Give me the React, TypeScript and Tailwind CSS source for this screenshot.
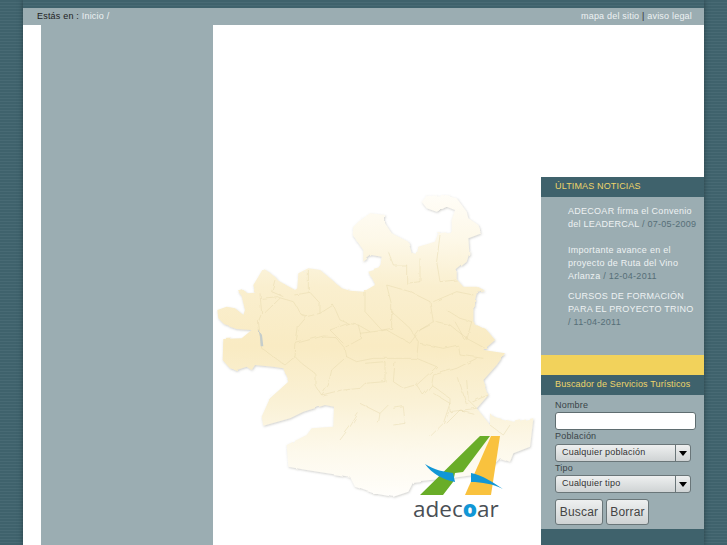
import React from 'react';

const outline =
  'M635 50 L650 33 L700 30 L740 40 L770 80 L775 100 L805 120 L815 145 L775 160 L778 205 L770 230 L740 255 L740 283 L760 305 L800 305 L825 318 L800 325 L790 365 L790 415 L830 435 L855 465 L820 495 L885 505 L860 540 L820 585 L835 630 L800 670 L840 720 L840 685 L850 695 L910 710 L970 700 L960 785 L910 805 L900 830 L870 820 L830 860 L790 870 L720 880 L660 885 L610 890 L595 920 L550 935 L490 925 L435 905 L420 875 L290 855 L235 845 L230 780 L290 750 L305 730 L370 725 L372 665 L345 660 L280 680 L240 700 L160 722 L155 695 L180 640 L235 590 L220 550 L190 545 L135 540 L125 555 L110 545 L80 555 L60 550 L38 525 L40 462 L95 460 L125 435 L80 432 L45 420 L25 400 L22 375 L50 365 L75 370 L100 390 L105 375 L95 333 L85 320 L100 315 L112 325 L135 323 L130 300 L145 275 L160 250 L195 275 L205 287 L255 315 L262 310 L265 265 L295 250 L330 255 L360 280 L395 310 L420 317 L460 320 L495 300 L475 260 L510 250 L515 215 L485 210 L460 230 L460 195 L428 150 L430 125 L445 110 L480 85 L525 90 L525 115 L545 145 L595 170 L605 205 L620 210 L625 185 L675 170 L685 145 L725 140 L725 105 L735 75 L710 65 L680 80 L650 70 Z';

const borders = [
  'M150 325 L155 385 L145 410 L155 490 L225 540',
  'M155 340 L205 335 M210 340 L165 383',
  'M205 337 L250 350 L275 390 L290 395 L265 425 L258 475 L255 515 L225 540',
  'M253 330 L300 322 L330 355 L330 385 L290 395',
  'M330 385 L370 360 L390 405 L415 415 L360 435 L400 475',
  'M258 475 L340 453 L375 455 L405 490 L410 515 L365 555 L355 600 L335 630 L315 600 L315 565 L275 535 L255 515',
  'M335 630 L395 615 M410 515 L440 530 L490 520',
  'M445 420 L455 460 L405 487 M415 415 L445 420 L480 440',
  'M465 320 L465 380 L515 435 L545 430 L545 360 L530 300',
  'M530 300 L600 320 L660 350 L670 410 L630 435 L600 475 L530 435 L450 445',
  'M545 380 L600 430 L625 470 L620 520 L490 520',
  'M630 435 L680 410 L720 420 L770 460 L825 490',
  'M670 350 L740 320 L790 330',
  'M710 375 L750 400 L785 410 L770 465 M735 410 L765 465',
  'M630 475 L700 490 L745 480 L750 510 L820 520',
  'M620 520 L680 545 L620 600 L640 630 L665 600 L670 570 L740 550 L800 520',
  'M465 535 L525 530 L525 590 L465 595 L450 610 L400 615',
  'M555 530 L550 590 L580 610 L615 600',
  'M745 580 L770 660 L810 640 L835 630',
  'M665 600 L720 640 L720 680 L800 670',
  'M535 200 L550 240 L590 240 L590 295 L630 290 L630 220',
  'M690 150 L680 230 L690 290 L740 285',
  'M450 655 L510 685 L535 660 M510 685 L505 715',
  'M445 685 L420 725 L390 765',
  'M550 670 L580 665 L585 715 L550 720',
  'M770 585 L775 645 L800 670',
  'M710 715 L750 675 L790 685 M670 625 L720 655 L700 715 L660 755',
  'M840 720 L880 750 L900 720',
  'M195 285 L185 320 L220 335 M295 255 L295 320',
];

export default function App() {
  return (
    <div className="relative h-[545px] w-[727px] overflow-hidden bg-[#41646e] bg-[repeating-linear-gradient(0deg,#3f626c_0px,#3f626c_2px,#486a74_2px,#486a74_3px)] font-['Liberation_Sans',Arial,sans-serif]">
      <div className="ml-[23px] flex h-[545px] w-[681px] flex-col pt-2 shadow-[0_0_5px_rgba(30,50,55,0.7)]">
        {/* top bar */}
        <div className="flex h-[17px] shrink-0 items-center justify-between bg-[#9badb2] pl-[14px] pr-3 text-[9px] tracking-[0.2px]">
          <div className="text-[#222]">
            Estás en : <span className="text-[#eef2f3]">Inicio</span> <span className="text-[#eef2f3]">/</span>
          </div>
          <div className="text-[#eef2f3]">
            mapa del sitio <span className="text-[#333]">|</span> aviso legal
          </div>
        </div>

        <div className="flex flex-1 bg-white">
          <div className="w-[18px] shrink-0" />
          <div className="w-[172px] shrink-0 bg-[#9badb2]" />

          {/* map */}
          <div className="relative w-[328px] shrink-0">
            <svg
              className="absolute left-[-3px] top-[160px]"
              width="330"
              height="320"
              viewBox="0 0 990 960"
            >
              <defs>
                <linearGradient id="mapFill" gradientUnits="userSpaceOnUse" x1="0" y1="30" x2="0" y2="940">
                  <stop offset="0" stopColor="#fffdf7" />
                  <stop offset="0.15" stopColor="#fdf8e8" />
                  <stop offset="0.3" stopColor="#faefcf" />
                  <stop offset="0.5" stopColor="#f9ebc3" />
                  <stop offset="0.68" stopColor="#faf1d5" />
                  <stop offset="0.85" stopColor="#fdf9ec" />
                  <stop offset="1" stopColor="#fffefb" />
                </linearGradient>
                <filter id="mapEdge" x="-5%" y="-5%" width="110%" height="110%">
                  <feTurbulence type="fractalNoise" baseFrequency="0.03" numOctaves="2" seed="4" result="noise" />
                  <feDisplacementMap in="SourceGraphic" in2="noise" scale="8" result="rough" />
                  <feGaussianBlur in="rough" stdDeviation="1.2" result="soft" />
                  <feDropShadow in="soft" dx="2" dy="3" stdDeviation="3.5" floodColor="#77776c" floodOpacity="0.35" />
                </filter>
                <filter id="mapLines" x="-5%" y="-5%" width="110%" height="110%">
                  <feTurbulence type="fractalNoise" baseFrequency="0.04" numOctaves="2" seed="9" result="noise" />
                  <feDisplacementMap in="SourceGraphic" in2="noise" scale="10" result="rough" />
                  <feGaussianBlur in="rough" stdDeviation="0.6" />
                </filter>
              </defs>
              <path d={outline} fill="url(#mapFill)" filter="url(#mapEdge)" />
              <g filter="url(#mapLines)">
                {borders.map((d) => (
                  <path key={d} d={d} fill="none" stroke="#e3d5a8" strokeOpacity="0.65" strokeWidth="2" strokeLinejoin="round" />
                ))}
                <path d="M146 436 L156 450 L160 484 L152 484 L150 455 Z" fill="#c5cdcb" />
              </g>
            </svg>

            {/* logo */}
            <svg className="absolute left-[205px] top-[411px]" width="100" height="62" viewBox="418 436 100 62">
              <path d="M490 436 L480 436 L420 495 L443 495 L453 482 L455 473 L463 472 Z" fill="#69ad28" />
              <path d="M491 436 L500 436 L491 495 L465 495 Z" fill="#f9c23e" />
              <path d="M425 464 C434 470 445 472 453 473 L455 482 C444 480 432 474 425 464 Z" fill="#1197d6" />
              <path d="M471 473 C482 475 494 483 503 489 C493 484 482 482 471 482 Z" fill="#1197d6" />
            </svg>
            <div className="absolute left-[200px] top-[469px] text-[22.5px] font-medium leading-[30px] text-[#4a4f55] font-['Open_Sans',sans-serif]">
              adec<span className="font-extrabold text-[#1197d6]">o</span>ar
            </div>
          </div>

          {/* right column */}
          <div className="flex min-w-0 flex-1 flex-col pt-[152px]">
            <div className="flex h-[20px] shrink-0 items-center bg-[#3f626c] pl-[14px] text-[9px] tracking-[0.15px] text-[#eed56a]">
              ÚLTIMAS NOTICIAS
            </div>
            <div className="h-[158px] shrink-0 bg-[#9badb2] pl-[27px] pt-[8px] text-[9px] leading-[13px] tracking-[0.27px] text-[#eef2f3]">
              <p>
                ADECOAR firma el Convenio
                <br />
                del LEADERCAL <span className="text-[#566f78]">/ 07-05-2009</span>
              </p>
              <p className="mt-[13px]">
                Importante avance en el
                <br />
                proyecto de Ruta del Vino
                <br />
                Arlanza <span className="text-[#566f78]">/ 12-04-2011</span>
              </p>
              <p className="mt-[7px]">
                CURSOS DE FORMACIÓN
                <br />
                PARA EL PROYECTO TRINO
                <br />
                <span className="text-[#566f78]">/ 11-04-2011</span>
              </p>
            </div>
            <div className="h-[20px] shrink-0 bg-[#f2d25b]" />
            <div className="flex h-[20px] shrink-0 items-center bg-[#3f626c] pl-[14px] text-[9px] tracking-[0.15px] text-[#eed56a]">
              Buscador de Servicios Turísticos
            </div>
            <div className="h-[134px] shrink-0 bg-[#9badb2] pl-[14px] pt-[4px] text-[9px] tracking-[0.2px] text-[#3a4448]">
              <div className="leading-[12px]">Nombre</div>
              <div className="mt-[1px] h-[18px] w-[141px] rounded-[3px] border border-[#5f6d70] bg-white" />
              <div className="leading-[13px]">Población</div>
              <Select label="Cualquier población" />
              <div className="leading-[12px]">Tipo</div>
              <Select label="Cualquier tipo" />
              <div className="mt-[6px] flex gap-[3px]">
                <Btn label="Buscar" w="w-[48px]" />
                <Btn label="Borrar" w="w-[43px]" />
              </div>
            </div>
            <div className="flex-1 bg-[#3f626c]" />
          </div>
        </div>
      </div>
    </div>
  );
}

function Select({ label }: { label: string }) {
  return (
    <div className="mt-[1px] flex h-[18px] w-[136px] items-center rounded-[3px] border border-[#6a7679] bg-gradient-to-b from-[#eef0f0] to-[#cfd3d4] text-[9px] tracking-[0.2px] text-[#333]">
      <div className="flex-1 pl-[6px]">{label}</div>
      <div className="flex h-full w-[15px] items-center justify-center border-l border-[#6a7679]">
        <div className="h-0 w-0 border-x-[4px] border-t-[5px] border-x-transparent border-t-black" />
      </div>
    </div>
  );
}

function Btn({ label, w }: { label: string; w: string }) {
  return (
    <div className={`flex h-[26px] ${w} items-center justify-center rounded-[3px] border border-[#6a7679] bg-gradient-to-b from-[#eef0f0] to-[#cfd3d4] text-[12px] tracking-[0.2px] text-[#444]`}>
      {label}
    </div>
  );
}
